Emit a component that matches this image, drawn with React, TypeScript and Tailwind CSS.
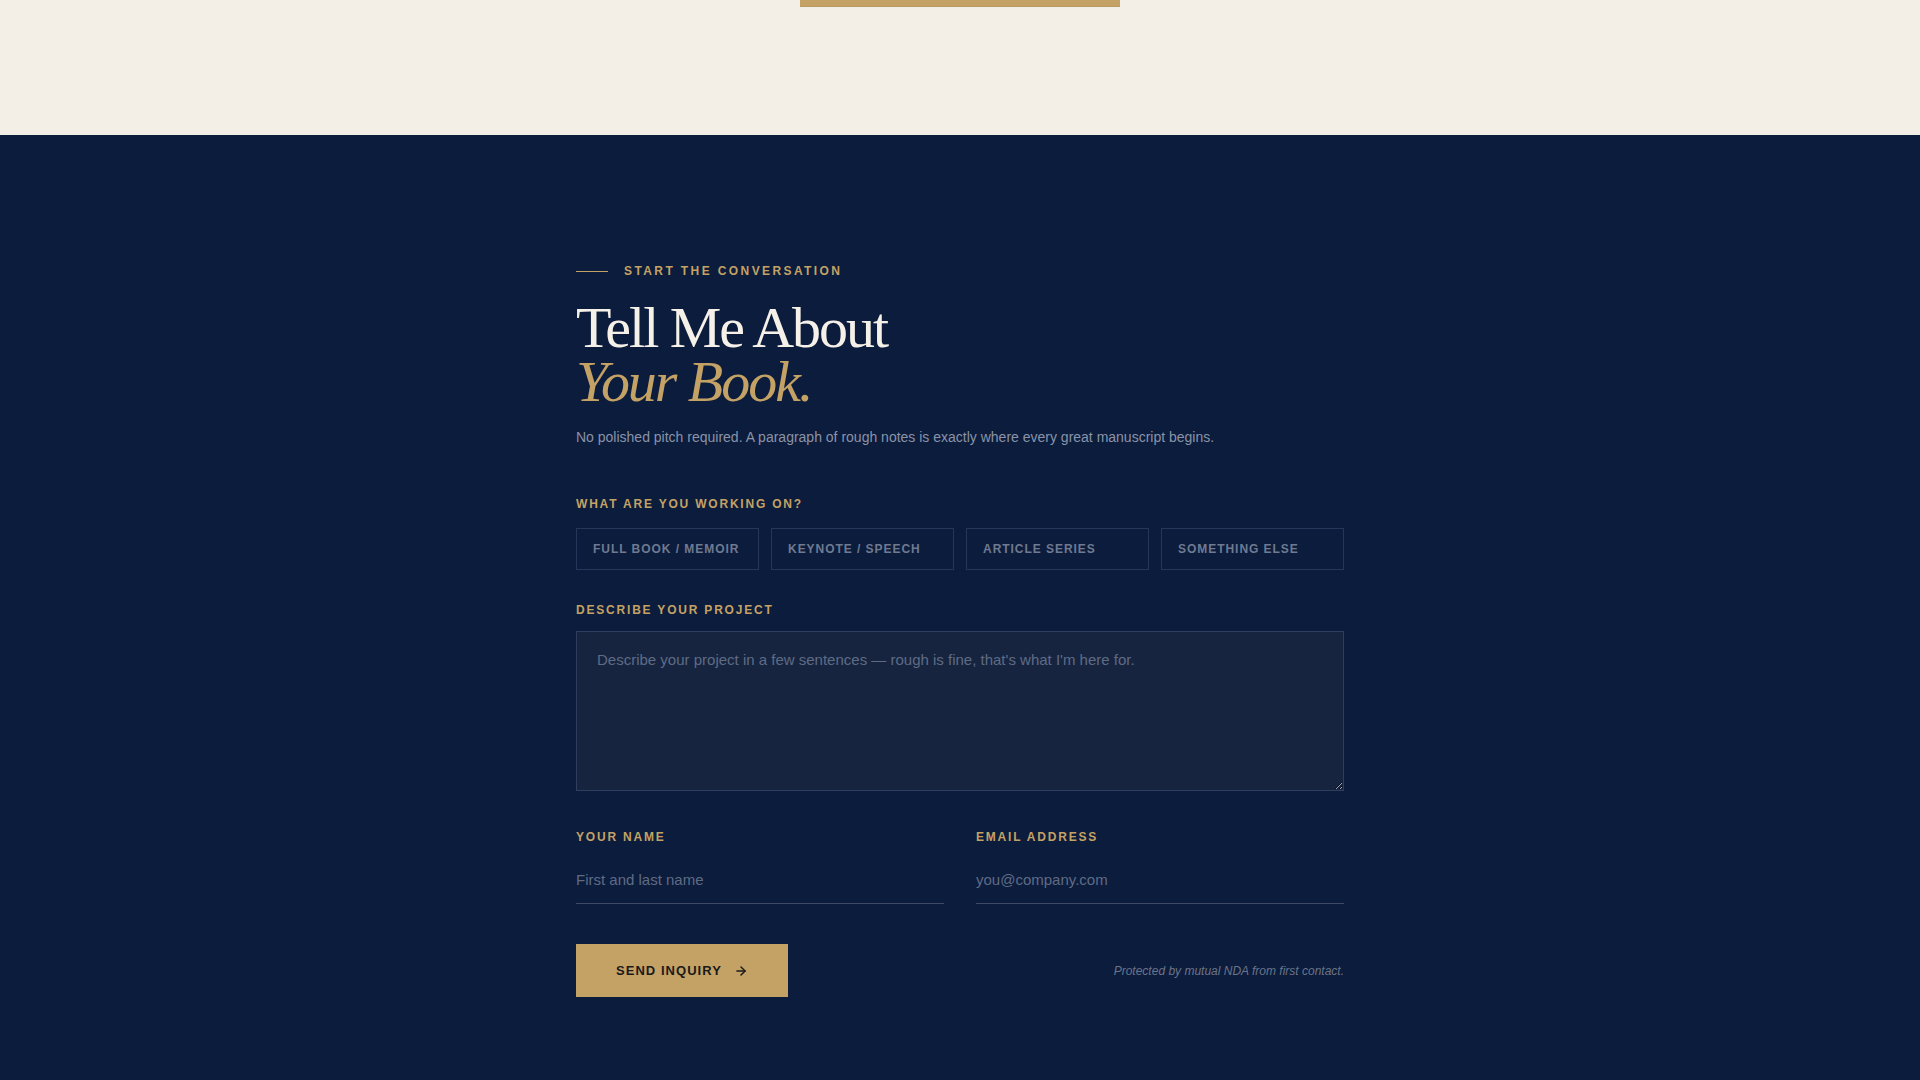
import { useState } from "react";
import { ArrowRight } from "lucide-react";

const projectTypes = [
  "Full Book / Memoir",
  "Keynote / Speech",
  "Article Series",
  "Something Else",
];

const labelClass =
  "block text-[12px] leading-4 font-bold uppercase tracking-[0.15em] text-[#c4a265]";

export default function App() {
  const [selected, setSelected] = useState<string | null>(null);

  return (
    <div className="min-h-screen bg-[#0c1c3c] font-['Liberation_Sans',Arial,sans-serif]">
      {/* Previous section (tail end) */}
      <section className="relative h-[135px] bg-[#f4efe6]">
        <div className="mx-auto h-[7px] w-[320px] border-b border-[#b89a63] bg-[#c4a265]" />
      </section>

      {/* Contact */}
      <section className="bg-[#0c1c3c] pt-32 pb-24">
        <div className="mx-auto w-[768px]">
          {/* Eyebrow */}
          <div className="flex items-center gap-4">
            <span className="h-px w-8 bg-[#c4a265]" />
            <span className="text-[12px] leading-4 font-bold uppercase tracking-[0.2em] text-[#c4a265]">
              Start the Conversation
            </span>
          </div>

          {/* Heading */}
          <h2 className="mt-[22px] font-['Liberation_Serif','Times_New_Roman',serif] text-[58px] leading-[54px] font-normal tracking-[-0.035em] text-[#f5f0e8]">
            Tell Me About
            <br />
            <em className="text-[#c4a265]">Your Book.</em>
          </h2>

          <p className="mt-4 text-[14px] leading-6 text-[#8a93a8]">
            No polished pitch required. A paragraph of rough notes is exactly
            where every great manuscript begins.
          </p>

          {/* Form */}
          <form className="mt-[47px]" onSubmit={(e) => e.preventDefault()}>
            <label className={labelClass}>What are you working on?</label>
            <div className="mt-4 grid grid-cols-4 gap-3">
              {projectTypes.map((type) => (
                <button
                  key={type}
                  type="button"
                  onClick={() => setSelected(type)}
                  className={
                    selected === type
                      ? "border border-[#c4a265] px-4 py-3 text-left text-[12px] leading-4 font-bold uppercase tracking-[0.08em] text-[#c4a265]"
                      : "border border-[#26365a] px-4 py-3 text-left text-[12px] leading-4 font-bold uppercase tracking-[0.08em] text-[#6f7a91]"
                  }
                >
                  {type}
                </button>
              ))}
            </div>

            <label className={`${labelClass} mt-8`}>Describe your project</label>
            <textarea
              className="mt-[13px] block h-40 w-full border border-[#2f3e5f] bg-[#16243f] px-5 py-4 text-[15px] leading-6 text-[#f5f0e8] placeholder:text-[#5f6b85] outline-none"
              placeholder="Describe your project in a few sentences — rough is fine, that's what I'm here for."
            />

            <div className="mt-[38px] grid grid-cols-2 gap-8">
              <div>
                <label className={labelClass}>Your Name</label>
                <input
                  type="text"
                  placeholder="First and last name"
                  className="mt-3 block w-full border-b border-[#3e4a63] bg-transparent py-3 text-[15px] leading-[22px] text-[#f5f0e8] placeholder:text-[#5f6b85] outline-none"
                />
              </div>
              <div>
                <label className={labelClass}>Email Address</label>
                <input
                  type="email"
                  placeholder="you@company.com"
                  className="mt-3 block w-full border-b border-[#3e4a63] bg-transparent py-3 text-[15px] leading-[22px] text-[#f5f0e8] placeholder:text-[#5f6b85] outline-none"
                />
              </div>
            </div>

            <div className="mt-10 flex items-center justify-between">
              <button
                type="submit"
                className="flex h-[53px] items-center gap-3 bg-[#c4a265] px-10 text-[13px] font-bold uppercase tracking-[0.08em] text-[#1a1a1a]"
              >
                Send Inquiry
                <ArrowRight size={14} strokeWidth={2.5} />
              </button>
              <p className="text-[12px] italic text-[#6b7489]">
                Protected by mutual NDA from first contact.
              </p>
            </div>
          </form>
        </div>
      </section>
    </div>
  );
}
